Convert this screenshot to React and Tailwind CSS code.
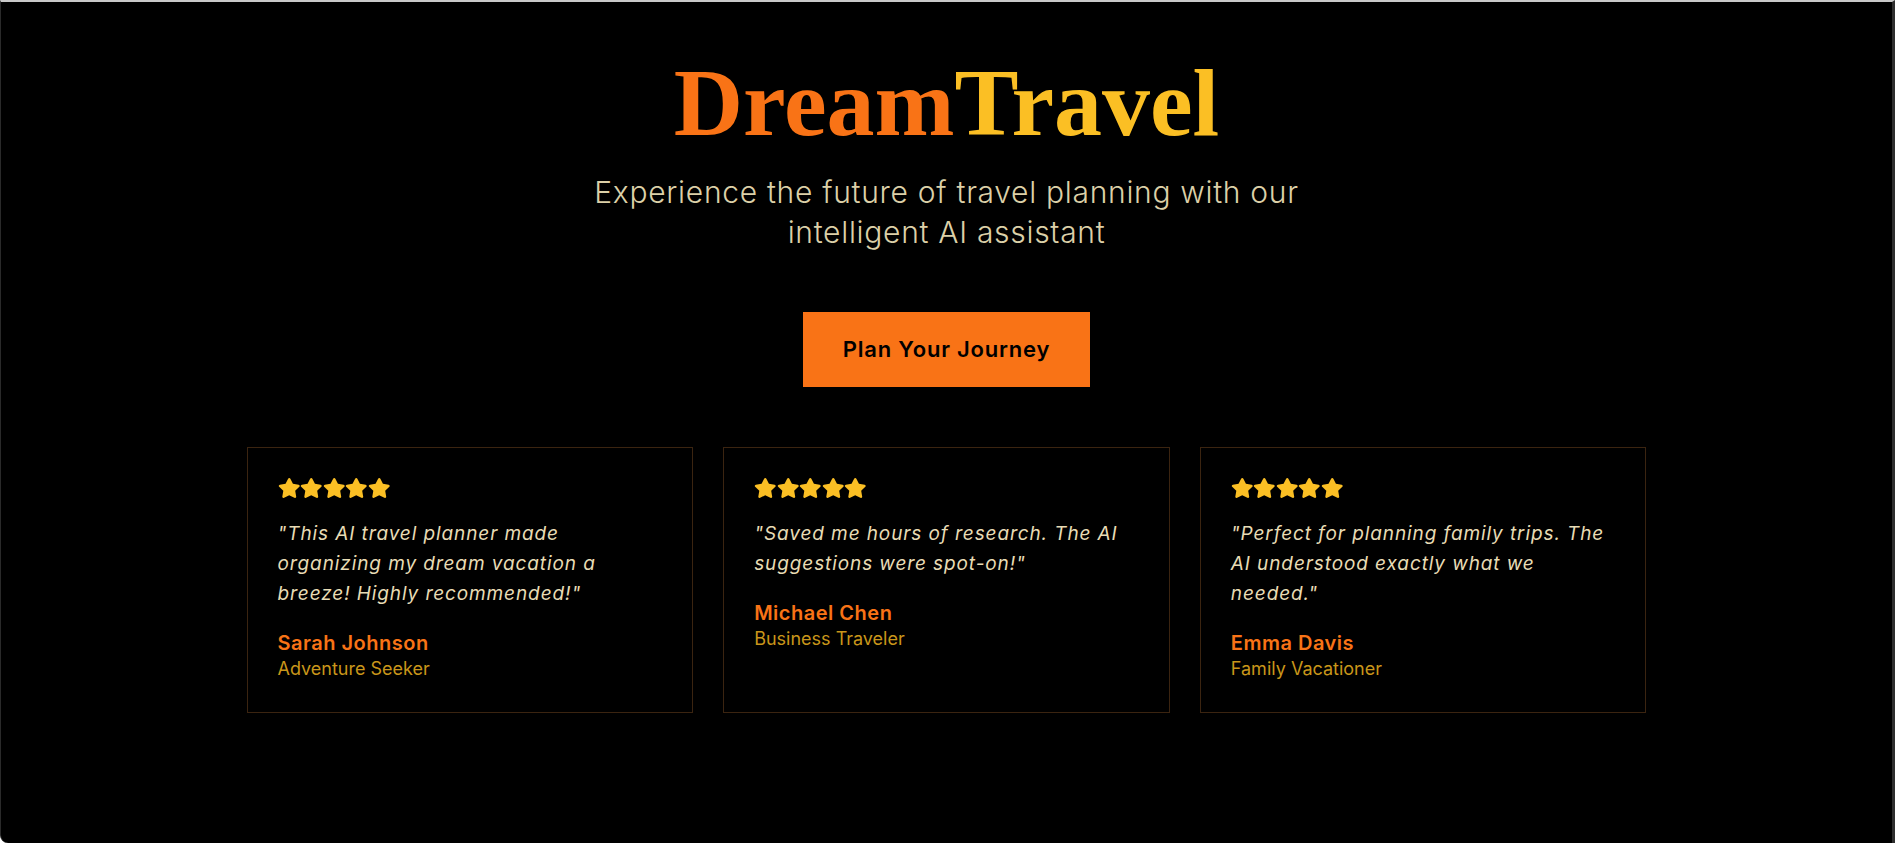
import React from 'react';
import { FaStar } from 'react-icons/fa';

const reviews = [
  {
    quote: '"This AI travel planner made organizing my dream vacation a breeze! Highly recommended!"',
    name: 'Sarah Johnson',
    role: 'Adventure Seeker',
  },
  {
    quote: '"Saved me hours of research. The AI suggestions were spot-on!"',
    name: 'Michael Chen',
    role: 'Business Traveler',
  },
  {
    quote: '"Perfect for planning family trips. The AI understood exactly what we needed."',
    name: 'Emma Davis',
    role: 'Family Vacationer',
  },
];

const ReviewCard = ({ quote, name, role }) => (
  <div className="border border-[#3b2410] bg-black px-[30px] pt-[30px] pb-[31px]">
    <div className="flex mb-[21px] text-[#fbbf24]">
      {[0, 1, 2, 3, 4].map((i) => (
        <FaStar key={i} className="h-5 w-[22.5px]" />
      ))}
    </div>
    <p className="italic text-[19px] leading-[30px] tracking-[0.9px] text-[#e8dcb5]">{quote}</p>
    <h3 className="mt-5 text-xl leading-7 font-semibold tracking-[0.5px] text-[#f97316]">{name}</h3>
    <p className="text-lg leading-6 text-[#c9961a]">{role}</p>
  </div>
);

const App = () => {
  return (
    <div className="min-h-screen bg-black border-t-2 border-t-[#c8c8c8] border-l border-l-[#2a2a2a] border-r-[3px] border-r-[#2e2e2e] rounded-bl-lg font-['Inter',sans-serif]">
      <div className="flex flex-col items-center pt-[53px]">
        <h1 className="text-8xl leading-none font-bold font-['Liberation_Serif',serif]">
          <span className="text-[#f97316]">Dream</span>
          <span className="text-[#fbbf24]">Travel</span>
        </h1>
        <p className="mt-[21px] max-w-[760px] text-center text-3xl leading-[40px] tracking-[0.7px] font-light text-[#dcd0a8]">
          Experience the future of travel planning with our intelligent AI assistant
        </p>
        <button className="mt-[60px] h-[75px] px-10 bg-[#f97316] text-[22px] tracking-[0.8px] font-semibold text-black">
          Plan Your Journey
        </button>
        <div className="mt-[60px] grid grid-cols-3 gap-[30px] w-[1400px]">
          {reviews.map((r) => (
            <ReviewCard key={r.name} {...r} />
          ))}
        </div>
      </div>
    </div>
  );
};

export default App;
